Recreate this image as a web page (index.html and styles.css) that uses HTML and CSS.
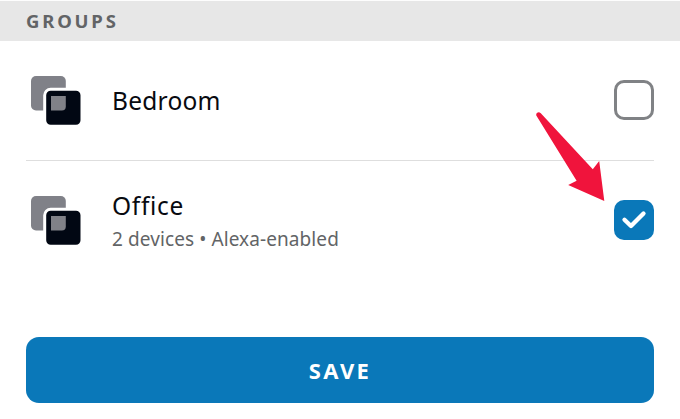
FILE: index.html
```
<!DOCTYPE html>
<html lang="en">

<head>
    <meta charset="UTF-8">
    <title>Groups</title>
    <link rel="stylesheet" href="styles.css">
</head>

<body>
    <h2 class="section-title"><span>GROUPS</span></h2>
    <ul class="group-list">
        <li class="group">
            <svg class="group-icon" viewBox="0 0 50 50">
                <rect class="icon-back" x="0" y="0" width="34.8" height="34.5" rx="5" />
                <rect class="icon-front" x="13.7" y="13.2" width="37.3" height="37" rx="6" />
                <path class="icon-overlap" d="M20 20H34.8V30.5Q34.8 34.5 30.8 34.5H20Z" />
            </svg>
            <div class="group-info">
                <p class="group-name"><span class="name-bedroom">Bedroom</span></p>
            </div>
            <span class="checkbox"></span>
        </li>
        <li class="group">
            <svg class="group-icon" viewBox="0 0 50 50">
                <rect class="icon-back" x="0" y="0" width="34.8" height="34.5" rx="5" />
                <rect class="icon-front" x="13.7" y="13.2" width="37.3" height="37" rx="6" />
                <path class="icon-overlap" d="M20 20H34.8V30.5Q34.8 34.5 30.8 34.5H20Z" />
            </svg>
            <div class="group-info">
                <p class="group-name"><span class="name-office">Office</span></p>
                <p class="group-detail"><span>2 devices • Alexa-enabled</span></p>
            </div>
            <span class="checkbox checked">
                <svg viewBox="0 0 40 40">
                    <path d="M10.5 19.8L17 26L29.5 13.5" />
                </svg>
            </span>
        </li>
    </ul>
    <button class="save" type="button"><span>SAVE</span></button>
    <svg class="arrow" viewBox="0 0 70 92">
        <path d="M0.3 3.5Q-0.3 0.8 2.5 0.3Q3.8 0.3 4.8 1.3L56.8 57.2L63.2 49L68.3 89L32.2 73L40.6 68.8Z" />
    </svg>
</body>

</html>
```
FILE: styles.css
```
body,
ul,
li,
h2,
p {
    padding: 0;
    margin: 0;
}

li {
    list-style: none;
}

body {
    position: relative;
    height: 419px;
    overflow: hidden;
    background: #fff;
    font-family: "Noto Sans", "Open Sans", sans-serif;
}

.section-title {
    box-sizing: border-box;
    height: 41px;
    padding-left: 26px;
    border-top: 1px solid #fdfdfd;
    background: #e7e7e7;
    color: #626466;
    font-size: 18.5px;
    font-weight: 700;
    line-height: 40px;
    letter-spacing: 2.8px;
}

.group-list {
    margin: 0 26px;
}

.group {
    display: flex;
    align-items: center;
    box-sizing: border-box;
    height: 119px;
}

.group:first-child {
    height: 120px;
    border-bottom: 1px solid #dedede;
}

.group-icon {
    width: 50px;
    height: 50px;
    margin-left: 5px;
    overflow: visible;
}

.icon-back,
.icon-overlap {
    fill: #808188;
}

.icon-front {
    fill: #010713;
    stroke: #fff;
    stroke-width: 3px;
}

.group-info {
    flex: 1;
    margin-left: 31px;
}

.group-name {
    color: #080a10;
    font-size: 24.5px;
    line-height: 34px;
}

.name-bedroom {
    letter-spacing: 0.25px;
}

.name-office {
    letter-spacing: 0.7px;
}

.group-detail {
    padding-top: 2px;
    color: #626466;
    font-size: 19px;
    line-height: 29px;
    letter-spacing: 0.09px;
}

.group:last-child .group-info {
    padding-top: 2px;
}

.checkbox {
    box-sizing: border-box;
    width: 40px;
    height: 40px;
    border: 3px solid #808285;
    border-radius: 10px;
}

.group .checkbox {
    margin-bottom: 1px;
}

.checkbox.checked {
    border: 0;
    background: #0a78b9;
}

.checkbox svg {
    display: block;
    fill: none;
    stroke: #fff;
    stroke-width: 4.3px;
    stroke-linecap: round;
    stroke-linejoin: round;
}

.save {
    display: block;
    width: 628px;
    height: 66px;
    margin: 57px 26px 0;
    padding: 0;
    border: 0;
    border-radius: 13px;
    background: #0a78b9;
    color: #fff;
    font-family: inherit;
    font-size: 22px;
    font-weight: 700;
    line-height: 64px;
    letter-spacing: 2.3px;
}

/* pointer to the selected group */
.arrow {
    position: absolute;
    top: 112px;
    left: 536px;
    width: 70px;
    height: 92px;
    fill: #f0143c;
}
```
